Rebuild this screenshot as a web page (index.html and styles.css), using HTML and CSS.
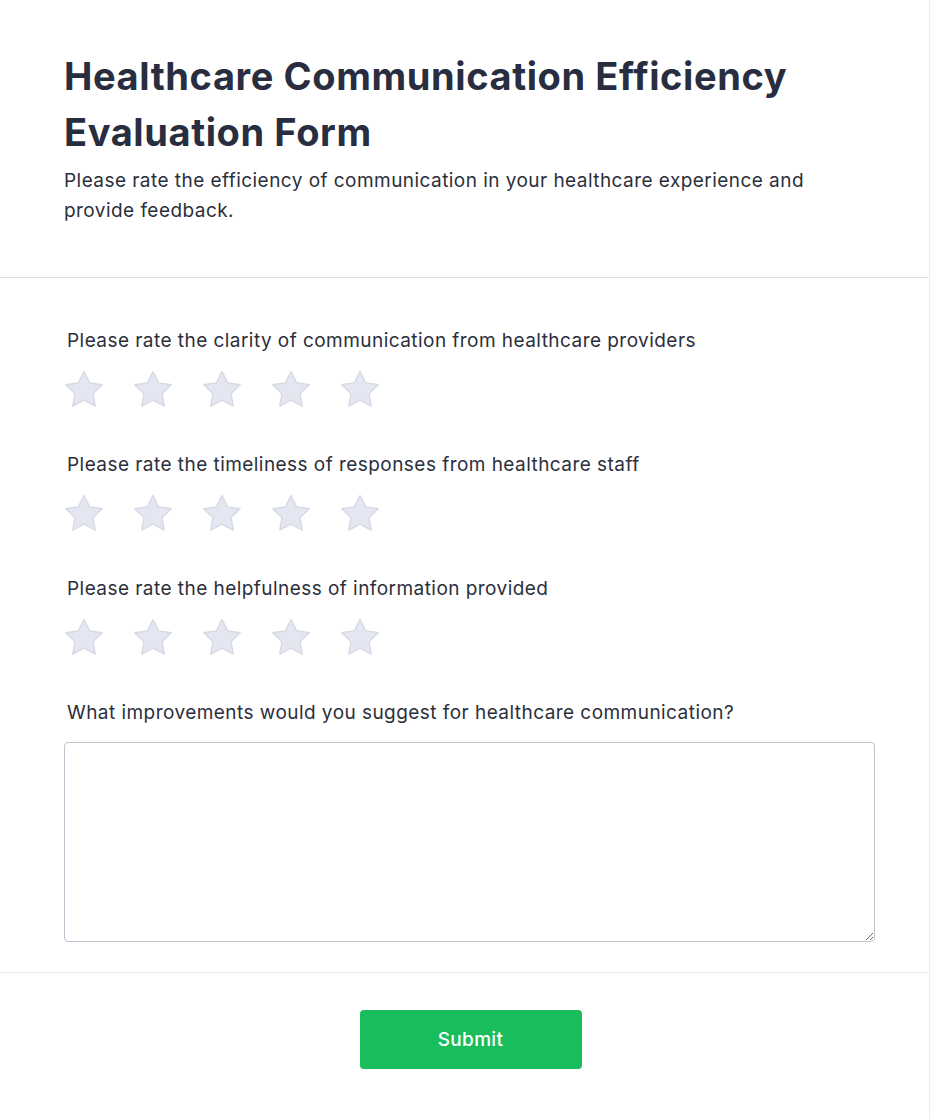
FILE: index.html
```html
<!DOCTYPE html>
<html lang="en">
<head>
<meta charset="utf-8">
<title>Healthcare Communication Efficiency Evaluation Form</title>
<link rel="stylesheet" href="styles.css">
</head>
<body>
<svg width="0" height="0" class="defs" aria-hidden="true">
  <defs>
    <symbol id="star" viewBox="0 0 24 24">
      <path d="M12 1.5L15.38 8.35L22.94 9.45L17.47 14.78L18.76 22.3L12 18.75L5.24 22.3L6.53 14.78L1.06 9.45L8.62 8.35Z" fill="#e4e7f1" stroke="#d6d9e4" stroke-width="0.8" stroke-linejoin="round"/>
    </symbol>
  </defs>
</svg>
<main class="card">
  <header class="head">
    <h1 class="title">Healthcare Communication Efficiency Evaluation Form</h1>
    <p class="desc">Please rate the efficiency of communication in your healthcare experience and provide feedback.</p>
  </header>
  <section class="body">
    <div class="question">
      <div class="label">Please rate the clarity of communication from healthcare providers</div>
      <div class="stars">
        <svg class="star"><use href="#star"/></svg><svg class="star"><use href="#star"/></svg><svg class="star"><use href="#star"/></svg><svg class="star"><use href="#star"/></svg><svg class="star"><use href="#star"/></svg>
      </div>
    </div>
    <div class="question">
      <div class="label">Please rate the timeliness of responses from healthcare staff</div>
      <div class="stars">
        <svg class="star"><use href="#star"/></svg><svg class="star"><use href="#star"/></svg><svg class="star"><use href="#star"/></svg><svg class="star"><use href="#star"/></svg><svg class="star"><use href="#star"/></svg>
      </div>
    </div>
    <div class="question">
      <div class="label">Please rate the helpfulness of information provided</div>
      <div class="stars">
        <svg class="star"><use href="#star"/></svg><svg class="star"><use href="#star"/></svg><svg class="star"><use href="#star"/></svg><svg class="star"><use href="#star"/></svg><svg class="star"><use href="#star"/></svg>
      </div>
    </div>
    <div class="question last">
      <div class="label">What improvements would you suggest for healthcare communication?</div>
      <textarea class="area"></textarea>
    </div>
  </section>
  <footer class="foot">
    <button class="submit" type="button">Submit</button>
  </footer>
</main>
</body>
</html>
```
FILE: styles.css
```css
* { box-sizing: border-box; }
html, body { margin: 0; padding: 0; background: #ffffff; }
body { font-family: Inter, "Noto Sans", sans-serif; color: #2b2f3b; }
.defs { position: absolute; width: 0; height: 0; }
.card {
  width: 930px;
  min-height: 1119px;
  border-right: 1px solid #ececf2;
  background: #fff;
}
.head {
  padding: 48px 64px 51px 64px;
  border-bottom: 1px solid #dcdce6;
}
.title {
  margin: 0;
  font-size: 38px;
  line-height: 56px;
  font-weight: 700;
  color: #282e3f;
  letter-spacing: 0.6px;
}
.desc {
  margin: 6px 0 0;
  font-size: 19px;
  line-height: 30px;
  letter-spacing: 0.45px;
  color: #2b2f3b;
}
.body {
  padding: 49px 54px 30px 64px;
  border-bottom: 1px solid #e8e8f1;
}
.question { margin-bottom: 43px; }
.question.last { margin-bottom: 0; }
.label {
  padding-left: 3px;
  font-size: 19px;
  line-height: 28px;
  letter-spacing: 0.45px;
  color: #2b2f3b;
}
.stars {
  display: flex;
  gap: 29px;
  margin-top: 17px;
  height: 36px;
}
.star { width: 40px; height: 40px; display: block; margin-top: -3px; flex: none; }
.area {
  display: block;
  width: 100%;
  height: 200px;
  margin-top: 15px;
  border: 1px solid #c0c2cf;
  border-radius: 4px;
  resize: vertical;
  font-family: inherit;
  font-size: 16px;
  padding: 8px 12px;
}
.foot {
  display: flex;
  justify-content: center;
  padding: 37px 55px 50px 67px;
}
.submit {
  width: 222px;
  height: 59px;
  border: none;
  border-radius: 4px;
  background: #19bd5b;
  color: #fff;
  font-family: inherit;
  font-size: 19px;
  font-weight: 500;
  letter-spacing: 0.3px;
  cursor: pointer;
}
```
